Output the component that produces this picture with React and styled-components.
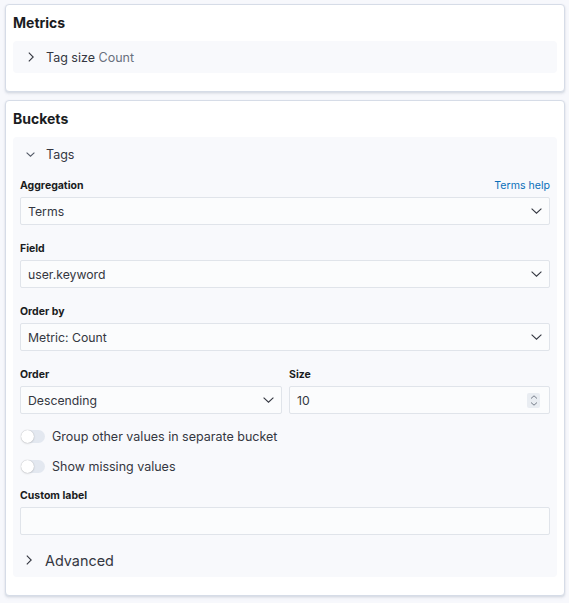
import React from 'react';
import styled, { createGlobalStyle } from 'styled-components';

const Global = createGlobalStyle`
  body {
    margin: 0;
    background: #f7f8fc;
    font-family: Inter, "Noto Sans", sans-serif;
    color: #343741;
  }
`;

const Page = styled.div`
  padding: 4px 4px 6px 5px;
  display: flex;
  flex-direction: column;
  gap: 8px;
`;

const Panel = styled.section`
  background: #fff;
  border: 1px solid #d6dce7;
  border-radius: 4px;
  box-shadow: 0 1px 2px rgba(152, 162, 179, 0.25), 0 2px 3px rgba(152, 162, 179, 0.15);
  padding: 8px 7px 18px 7px;
`;

const Title = styled.h2`
  margin: 0 0 8px;
  font-size: 14px;
  line-height: 20px;
  font-weight: 700;
  color: #1a1c21;
`;

const Accordion = styled.div`
  background: #f8f9fc;
  border-radius: 4px;
  padding: 0 7px;
`;

const AccHeader = styled.div`
  display: flex;
  align-items: center;
  height: ${(p) => p.$h || 32}px;
  gap: ${(p) => p.$gap || 11}px;
  padding-left: ${(p) => p.$pad || 7}px;
  font-size: ${(p) => p.$size || 12.5}px;
  color: #343741;
`;

const Muted = styled.span`
  color: #69707d;
`;

const Body = styled.div`
  display: flex;
  flex-direction: column;
  padding-top: 6px;
`;

const Field = styled.div`
  display: flex;
  flex-direction: column;
  margin-bottom: ${(p) => p.$mb ?? 15}px;
  min-width: 0;
`;

const LabelRow = styled.div`
  display: flex;
  justify-content: space-between;
  align-items: center;
  height: 16px;
  margin-bottom: 4px;
`;

const Label = styled.label`
  font-size: 10.5px;
  font-weight: 700;
  color: #1a1c21;
`;

const Link = styled.a`
  font-size: 10.6px;
  color: #0a6fb9;
  text-decoration: none;
`;

const Input = styled.div`
  height: 28px;
  box-sizing: border-box;
  border: 1px solid #e0e4ea;
  border-radius: 2px;
  background: #fbfcfd;
  display: flex;
  align-items: center;
  justify-content: space-between;
  padding: 0 ${(p) => p.$pr ?? 7}px 0 7px;
  font-size: 12.25px;
  color: #343741;
`;

const Split = styled.div`
  display: grid;
  grid-template-columns: 262px 1fr;
  gap: 7px;
`;

const Spinner = styled.span`
  width: 13px;
  height: 15px;
  background: #e9edf2;
  border-radius: 2px;
  display: flex;
  align-items: center;
  justify-content: center;
`;

const Switches = styled.div`
  margin-top: -4px;
  margin-bottom: 10px;
  display: flex;
  flex-direction: column;
  gap: 8px;
`;

const SwitchRow = styled.div`
  display: flex;
  align-items: center;
  gap: 7px;
  height: 22px;
  font-size: 12.5px;
  color: #343741;
`;

const Track = styled.span`
  position: relative;
  width: 24px;
  height: 13px;
  border-radius: 7px;
  background: #e3e8f0;
  margin-left: 1px;
`;

const Knob = styled.span`
  position: absolute;
  left: 0;
  top: 0;
  width: 13px;
  height: 13px;
  border-radius: 50%;
  background: #fff;
  box-shadow: 0 0 1px rgba(0, 0, 0, 0.3), 0 1px 2px rgba(0, 0, 0, 0.1);
`;

const Spacer = styled.div`
  height: 5px;
`;

const ChevronRight = ({ w = 6, h = 10 }) => (
  <svg width={w} height={h} viewBox={`0 0 ${w} ${h}`} fill="none" stroke="#343741" strokeWidth="1.1">
    <path d={`M0.8 0.6 L${w - 0.8} ${h / 2} L0.8 ${h - 0.6}`} />
  </svg>
);

const ChevronDown = ({ w = 11, h = 6, color = '#343741' }) => (
  <svg width={w} height={h} viewBox={`0 0 ${w} ${h}`} fill="none" stroke={color} strokeWidth="1.1">
    <path d={`M0.6 0.6 L${w / 2} ${h - 0.8} L${w - 0.6} 0.6`} />
  </svg>
);

const SpinIcon = () => (
  <svg width="8" height="11" viewBox="0 0 8 11" fill="none" stroke="#69707d" strokeWidth="0.9">
    <path d="M1 3.5 L4 0.8 L7 3.5" />
    <path d="M1 7.5 L4 10.2 L7 7.5" />
  </svg>
);

function Select({ value }) {
  return (
    <Input>
      <span>{value}</span>
      <ChevronDown />
    </Input>
  );
}

function Switch({ children }) {
  return (
    <SwitchRow>
      <Track>
        <Knob />
      </Track>
      {children}
    </SwitchRow>
  );
}

export default function App() {
  return (
    <>
      <Global />
      <Page>
        <Panel>
          <Title>Metrics</Title>
          <Accordion>
            <AccHeader $pad={8} $gap={12}>
              <ChevronRight />
              <span>
                Tag size <Muted>Count</Muted>
              </span>
            </AccHeader>
          </Accordion>
        </Panel>

        <Panel>
          <Title>Buckets</Title>
          <Accordion>
            <AccHeader $h={34} $pad={6} $gap={11}>
              <ChevronDown w={9} h={5} color="#535966" />
              <span>Tags</span>
            </AccHeader>
            <Body>
              <Field>
                <LabelRow>
                  <Label>Aggregation</Label>
                  <Link>Terms help</Link>
                </LabelRow>
                <Select value="Terms" />
              </Field>
              <Field>
                <LabelRow>
                  <Label>Field</Label>
                </LabelRow>
                <Select value="user.keyword" />
              </Field>
              <Field>
                <LabelRow>
                  <Label>Order by</Label>
                </LabelRow>
                <Select value="Metric: Count" />
              </Field>
              <Split>
                <Field>
                  <LabelRow>
                    <Label>Order</Label>
                  </LabelRow>
                  <Select value="Descending" />
                </Field>
                <Field>
                  <LabelRow>
                    <Label>Size</Label>
                  </LabelRow>
                  <Input $pr={9}>
                    <span>10</span>
                    <Spinner>
                      <SpinIcon />
                    </Spinner>
                  </Input>
                </Field>
              </Split>
              <Switches>
                <Switch>Group other values in separate bucket</Switch>
                <Switch>Show missing values</Switch>
              </Switches>
              <Field $mb={13}>
                <LabelRow>
                  <Label>Custom label</Label>
                </LabelRow>
                <Input />
              </Field>
              <AccHeader $h={24} $pad={6} $gap={13} $size={14.4}>
                <ChevronRight w={6} h={10} />
                <span>Advanced</span>
              </AccHeader>
              <Spacer />
            </Body>
          </Accordion>
        </Panel>
      </Page>
    </>
  );
}
